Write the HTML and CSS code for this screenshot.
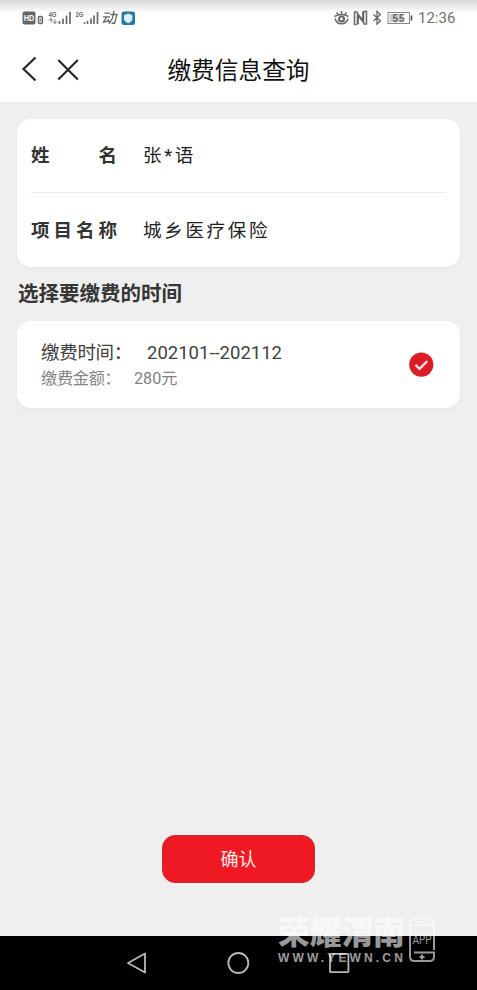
FILE: index.html
```html
<!DOCTYPE html>
<html lang="zh-CN">
<head>
<meta charset="utf-8">
<title>缴费信息查询</title>
<link rel="stylesheet" href="styles.css">
</head>
<body>
<div class="screen">
  <header class="top">
    <div class="status">
      <svg class="status-left" width="116" height="20" viewBox="0 0 116 20">
        <rect x="0.5" y="3.5" width="13" height="13" rx="2" fill="#666"/>
        <text x="1.8" y="13.3" class="hd" textLength="10.5" lengthAdjust="spacingAndGlyphs">HD</text>
        <rect x="16.5" y="8.500" width="3.8" height="7" rx="1" fill="none" stroke="#666" stroke-width="1.5"/>
        <path d="M18.3 10.500v3" stroke="#777"/>
        <text x="26.5" y="8.5" class="net" textLength="8" lengthAdjust="spacingAndGlyphs">4G</text>
        <path d="M29 10.500v4m-2-2 2-2 2 2m2-1v4m-2-2 2 2 2-2" fill="none" stroke="#777"/>
        <path d="M37.500 13v3M41 10.500V16M44.500 7.500V16M48 4V16" stroke="#6a6a6a" stroke-width="1.700"/>
        <text x="53.5" y="8.5" class="net" textLength="8" lengthAdjust="spacingAndGlyphs">2G</text>
        <path d="M62.500 14.500V16M65.500 13v3M69 10.500V16M72 7.500V16M75.500 4V16" stroke="#6a6a6a" stroke-width="1.700"/>
        <path d="M82.5 5.200h5.500M81 8.800h7M84.500 9l-3 5 5-1M86 11l1.500 3.500M88.500 6.500H95L92.500 15.500l-3-.5M92 3l-1.500 7-3.500 6" fill="none" stroke="#666" stroke-width="1.300"/>
        <rect x="99.500" y="3.500" width="13.500" height="13.500" rx="2.500" fill="#247ba6"/>
        <path d="M106.200 5.500 110.400 7.200v3.200q0 3-4.200 4.800-4.200-1.800-4.200-4.800V7.200z" fill="#d9f4ff"/>
      </svg>
      <div class="status-right">
        <svg width="80" height="20" viewBox="0 0 80 20">
          <g fill="none" stroke="#666">
            <path d="M1.500 8.500Q8.500 4.500 15.500 8.500M2 10.500Q3.500 15.800 8.500 15.800T15 10.500M8.500 3V6M3.500 4.500l1.500 2M13.500 4.500l-1.500 2" stroke-width="1.500"/>
            <circle cx="8.500" cy="11" r="2.500" stroke-width="2.200"/>
            <path d="M24.500 4h-3v12.500h2M30 3.500h3.500V16h-3" stroke-width="1.500"/>
            <path d="M24.800 16.500V6.500l5.400 7V3.500" stroke-width="2.200"/>
            <path d="m40.500 6.500 7 6.500-3.500 3V3.500l3.500 3-7 6.500" stroke-width="1.300"/>
            <rect x="55" y="4.500" width="21.500" height="11" stroke="#888"/>
          </g>
          <rect x="56.500" y="6" width="13" height="8" fill="#ccc"/>
          <path d="M78.500 7.500v5" stroke="#555" stroke-width="1.700"/>
          <text x="59.500" y="14" class="battery" textLength="12">55</text>
        </svg>
        <span class="clock">12:36</span>
      </div>
    </div>
    <div class="titlebar">
      <svg class="nav-icons" width="60" height="28" viewBox="0 0 60 28">
        <path d="M15.500 2.500 3.500 14 15.500 25.500" fill="none" stroke="#282828" stroke-width="2.200"/>
        <path d="m38.300 5 19.500 19.500M57.800 5 38.300 24.500" fill="none" stroke="#282828" stroke-width="2.200"/>
      </svg>
      <h1>缴费信息查询</h1>
    </div>
  </header>

  <main>
    <section class="card info">
      <div class="row"><span class="label"><b>姓</b><b>名</b></span><span class="value">张*语</span></div>
      <div class="row"><span class="label"><b>项</b><b>目</b><b>名</b><b>称</b></span><span class="value">城乡医疗保险</span></div>
    </section>
    <h2>选择要缴费的时间</h2>
    <section class="card period">
      <div>
        <div class="time"><span class="key">缴费时间：</span><span>202101--202112</span></div>
        <div class="amount"><span class="key">缴费金额：</span><span>280元</span></div>
      </div>
      <svg width="26" height="26" viewBox="0 0 26 26">
        <circle cx="13.300" cy="12.600" r="12.100" fill="#dc1d27"/>
        <path d="m7.500 12.900 4 3.900 7.700-7.700" fill="none" stroke="#fbdfe1" stroke-width="2.400"/>
      </svg>
    </section>
    <button class="confirm">确认</button>
  </main>

  <nav class="system">
    <svg width="22" height="24" viewBox="0 0 22 24"><path d="M19 2.500v19L2 12z" fill="none" stroke="#b8b8b8" stroke-width="1.800" stroke-linejoin="round"/></svg>
    <svg width="24" height="24" viewBox="0 0 24 24"><circle cx="12.300" cy="12" r="10" fill="none" stroke="#b8b8b8" stroke-width="1.800"/></svg>
    <svg width="22" height="22" viewBox="0 0 22 22"><rect x="2" y="1.800" width="18.400" height="18.400" rx="1" fill="none" stroke="#b8b8b8" stroke-width="1.800"/></svg>
  </nav>

  <div class="watermark">
    <div>
      <div class="brand">荣耀渭南</div>
      <div class="site">WWW.YEWN.CN</div>
    </div>
    <svg width="28" height="46" viewBox="0 0 28 46">
      <path d="M26 33V6q0-4.500-4.500-4.500h-15Q2 1.500 2 6v33.500Q2 44 6.500 44h15q4.500 0 4.500-4.500V35.500H6M2 8h24" fill="none" stroke="#fff" stroke-width="2"/>
      <path d="M10 5h8M14 37.500v5M11.500 40h5" stroke="#fff" stroke-width="2"/>
      <text x="4.500" y="27" class="app" textLength="19" lengthAdjust="spacingAndGlyphs">APP</text>
    </svg>
  </div>
</div>
</body>
</html>
```
FILE: styles.css
```css
* { box-sizing: border-box; }
body { margin: 0; font-family: Roboto, "Noto Sans CJK SC", sans-serif; color: #222; }
svg { display: block; flex: none; }
.screen { position: relative; width: 477px; height: 990px; display: flex; flex-direction: column; background: #efefef; overflow: hidden; }
.top { height: 102px; background: linear-gradient(#d6d6d6, #fff 13px); }
.status { height: 36px; display: flex; justify-content: space-between; padding: 8px 21px 0 22px; }
.status-right { display: flex; gap: 5px; }
.clock { font-size: 15px; line-height: 21px; color: #707070; width: 38px; white-space: nowrap; }
.hd { font: bold 8.5px "Liberation Sans", sans-serif; fill: #fff; }
.net { font: bold 8px "Liberation Sans", sans-serif; fill: #666; }
.battery { font: bold 10px "Liberation Sans", sans-serif; fill: #666; }
.titlebar { height: 66px; display: grid; grid-template-columns: 80px 1fr 80px; align-items: center; }
.nav-icons { margin-left: 20px; }
h1 { margin: 4px 0 0; font-size: 23.7px; line-height: 34px; font-weight: 400; text-align: center; color: #111; }
main { flex: 1; display: flex; flex-direction: column; padding: 17px 17px 53px; }
.card { background: #fff; border-radius: 14px; box-shadow: 0 2px 4px rgba(0, 0, 0, .035); }
.info { height: 148px; padding: 0 14px; }
.row { height: 73px; display: flex; align-items: center; padding-bottom: 3px; font-size: 18.5px; }
.row + .row { border-top: 1px solid #ededed; padding-bottom: 1px; }
.label { width: 86px; margin-right: 26px; display: flex; justify-content: space-between; }
.label b { font-weight: 700; color: #333; }
.value { letter-spacing: 2.7px; color: #222; }
h2 { margin: 12px 0 0 1px; font-size: 20.5px; line-height: 30px; font-weight: 700; color: #363636; }
.period { margin-top: 12px; height: 87px; display: flex; justify-content: space-between; padding: 18px 26px 0 24px; }
.period svg { margin-top: 13px; }
.time { display: flex; font-size: 18.5px; line-height: 29px; color: #414141; }
.time .key { width: 106px; letter-spacing: -.3px; }
.amount { display: flex; font-size: 16.2px; line-height: 22px; color: #828282; }
.amount .key { width: 93px; letter-spacing: -.3px; }
.confirm { margin: auto auto 0; width: 153px; height: 48px; border: 1px solid #c92b32; border-radius: 13px; background: #ee1922; color: #ffe9e9; font: 18px/45px Roboto, "Noto Sans CJK SC", sans-serif; padding: 0; }
.system { height: 54px; background: #000; display: flex; justify-content: space-between; align-items: center; padding: 0 127px 0 126px; }
.watermark { position: absolute; left: 278px; top: 917px; display: flex; gap: 3px; opacity: .6; color: #fff; }
.watermark > div { width: 127px; }
.brand { font-size: 31.7px; font-weight: 900; line-height: 34px; white-space: nowrap; }
.site { font: bold 12px/13px "Liberation Sans", sans-serif; letter-spacing: 3.15px; margin-top: 1px; white-space: nowrap; }
.app { font-size: 12px; fill: #fff; }
```
